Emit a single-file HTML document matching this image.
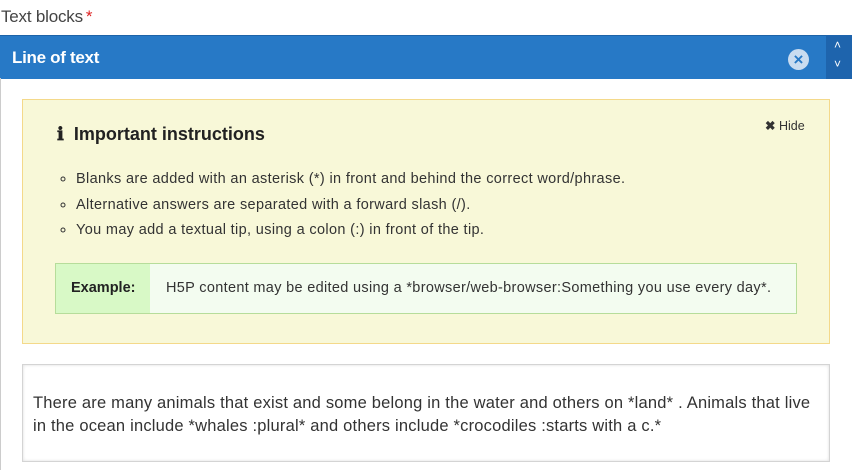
<!DOCTYPE html>
<html><head><style>
body{margin:0;width:852px;height:470px;overflow:hidden;background:#fff;font-family:"Liberation Sans",sans-serif;color:#333;position:relative}
.a{position:absolute}
</style></head><body>
<div class="a" style="left:1px;top:7px;font-size:17px;color:#444;letter-spacing:-0.2px">Text blocks<span style="color:#d22;margin-left:3px">*</span></div>
<div class="a" style="left:0;top:35px;width:826px;height:43px;background:#2779c6;border-top:1px solid #1d63a8"></div>
<div class="a" style="left:12px;top:48px;font-size:17px;font-weight:bold;color:#fff;letter-spacing:-0.3px">Line of text</div>
<div class="a" style="left:788px;top:49px;width:21px;height:21px;border-radius:50%;background:#c9dcf0;color:#2779c6;font-size:17px;font-weight:bold;text-align:center;line-height:21px">×</div>
<div class="a" style="left:826px;top:35px;width:26px;height:44px;background:#1e64ad"></div>
<div class="a" style="left:834px;top:38px;color:#fff;font-size:12px">˄</div>
<div class="a" style="left:834px;top:57px;color:#fff;font-size:12px">˅</div>
<div class="a" style="left:0;top:78px;width:1px;height:392px;background:#ccc"></div>
<div class="a" style="left:22px;top:99px;width:806px;height:243px;background:#f8f8d8;border:1px solid #f4d98a"></div>
<div class="a" style="left:57px;top:124px;font-size:18px;font-weight:bold;color:#222">ℹ&nbsp; Important instructions</div>
<div class="a" style="left:765px;top:118px;font-size:12.5px;color:#333"><b>✖</b> Hide</div>
<ul class="a" style="left:40px;top:167px;margin:0;padding-left:36px;font-size:14.5px;line-height:25.5px;color:#333;letter-spacing:0.35px;list-style:circle">
<li>Blanks are added with an asterisk (*) in front and behind the correct word/phrase.</li>
<li>Alternative answers are separated with a forward slash (/).</li>
<li>You may add a textual tip, using a colon (:) in front of the tip.</li>
</ul>
<div class="a" style="left:55px;top:263px;width:740px;height:49px;background:#f3fcf0;border:1px solid #b6dd9a"></div>
<div class="a" style="left:56px;top:264px;width:94px;height:49px;background:#d8f9c6"></div>
<div class="a" style="left:71px;top:280px;font-size:14.5px;font-weight:bold;color:#222">Example:</div>
<div class="a" style="left:166px;top:280px;font-size:14.5px;color:#333;letter-spacing:0.32px;white-space:nowrap">H5P content may be edited using a *browser/web-browser:Something you use every day*.</div>
<div class="a" style="left:22px;top:364px;width:806px;height:96px;background:#fff;border:1px solid #d4d4d4;box-shadow:inset 0 0 3px #ddd"></div>
<div class="a" style="left:33px;top:392px;font-size:16.5px;line-height:23px;color:#333;letter-spacing:0.2px;white-space:nowrap">There are many animals that exist and some belong in the water and others on *land* . Animals that live<br>in the ocean include *whales :plural* and others include *crocodiles :starts with a c.*</div>
</body></html>
